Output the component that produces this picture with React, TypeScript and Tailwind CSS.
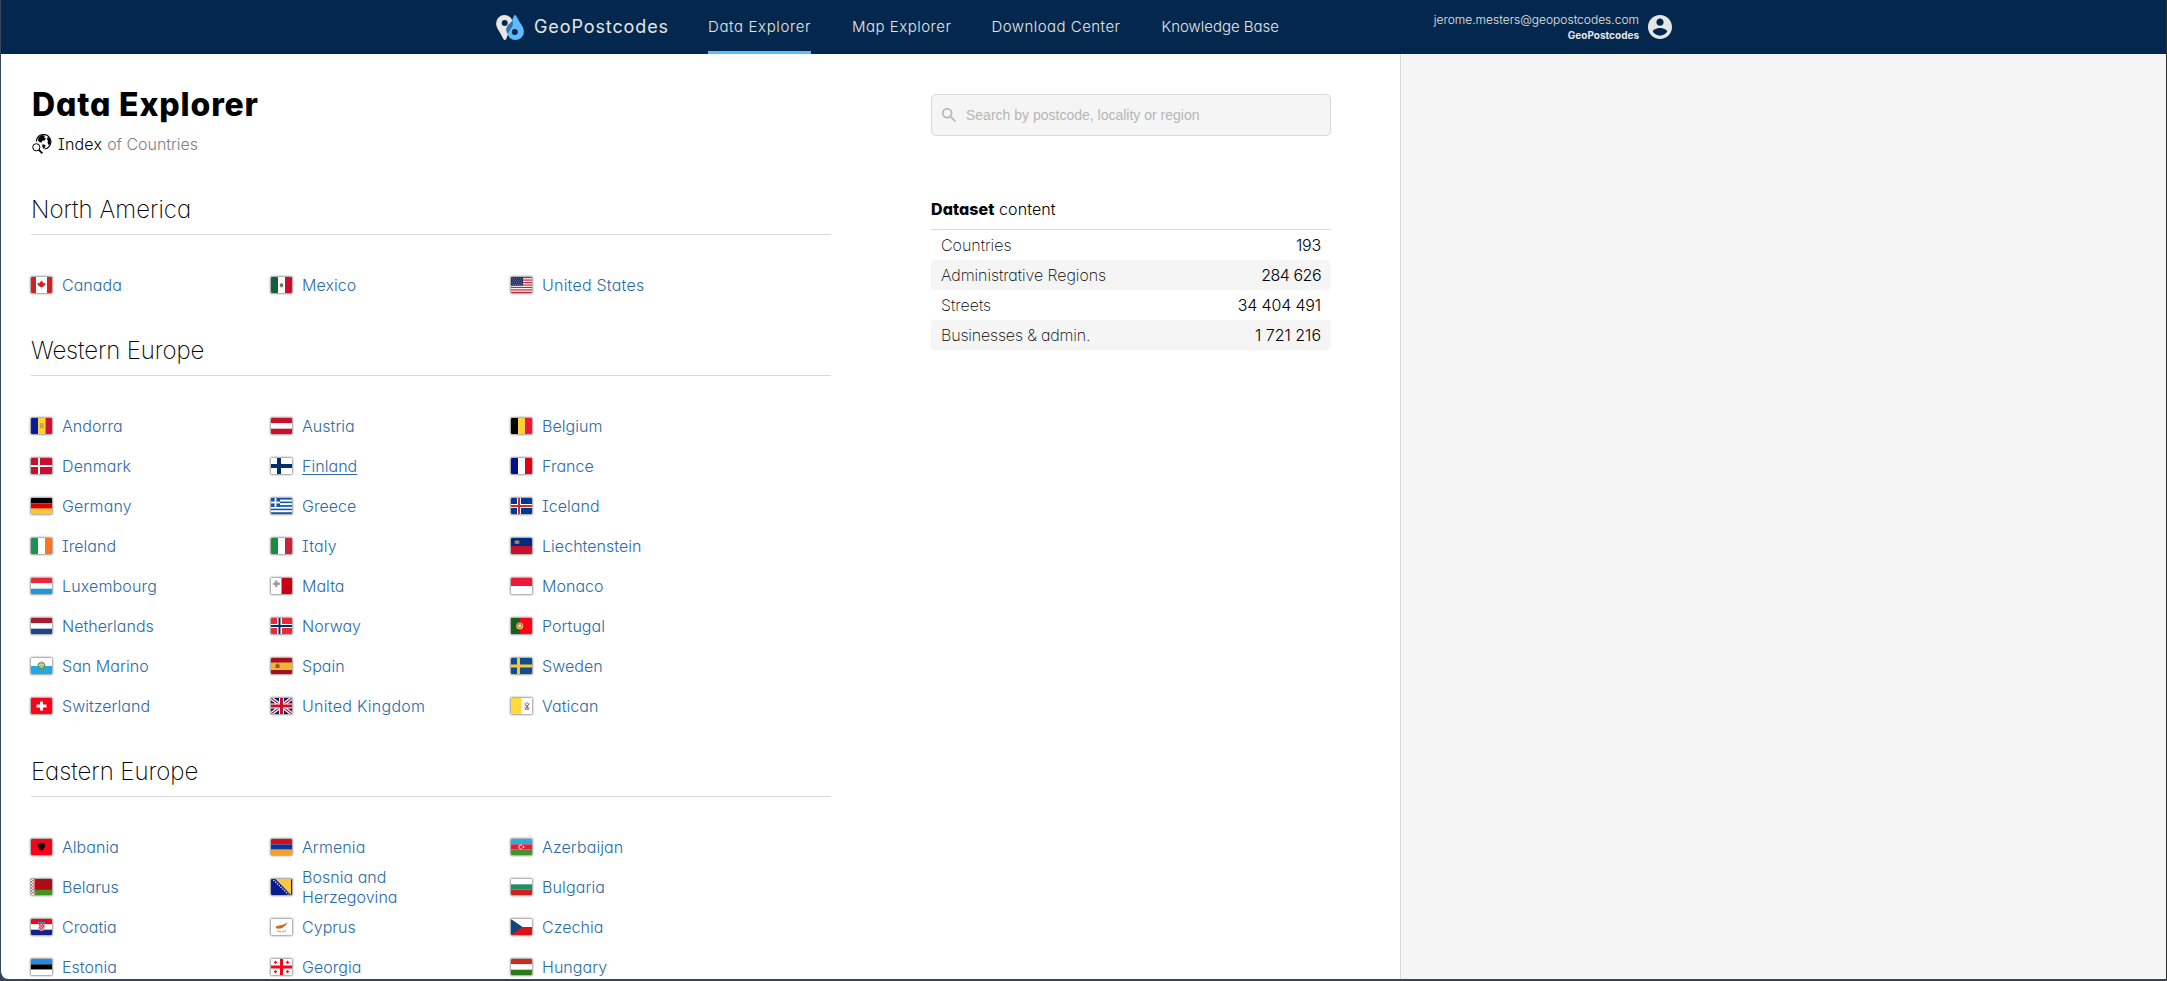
import type { ReactNode } from "react";

const rect = (x: number, y: number, w: number, h: number, f: string) => (
  <rect x={x} y={y} width={w} height={h} fill={f} />
);

function V({ c }: { c: string[] }) {
  return <>{c.map((f, i) => <rect key={i} x={i * 7} width="7" height="16" fill={f} />)}</>;
}

function H({ c }: { c: string[] }) {
  const h = 16 / c.length;
  return <>{c.map((f, i) => <rect key={i} y={i * h} width="21" height={h} fill={f} />)}</>;
}

function Nordic({ bg, outer, inner }: { bg: string; outer: string; inner?: string }) {
  return (
    <>
      {rect(0, 0, 21, 16, bg)}
      {inner ? (
        <>
          {rect(6, 0, 4, 16, outer)}
          {rect(0, 6, 21, 4, outer)}
          {rect(7, 0, 2, 16, inner)}
          {rect(0, 7, 21, 2, inner)}
        </>
      ) : (
        <>
          {rect(6, 0, 3, 16, outer)}
          {rect(0, 6.5, 21, 3, outer)}
        </>
      )}
    </>
  );
}

const flags: Record<string, ReactNode> = {
  Canada: (
    <>
      {rect(0, 0, 21, 16, "#fff")}
      {rect(0, 0, 5, 16, "#d22027")}
      {rect(16, 0, 5, 16, "#d22027")}
      <path d="M10.5 3.500l1 1.600.9-.3-.2 2 1.500-1 .9.700-.4 1.600-2.500 1.900h-1v1.800h-.4V10h-1L6.800 8.100l-.4-1.600.9-.7 1.500 1-.2-2 .9.300z" fill="#d22027" />
    </>
  ),
  Mexico: (
    <>
      <V c={["#12603f", "#fff", "#c8102e"]} />
      <path d="M8.500 8.500l1-2 1.500-.5 1 1.500.5 2h-1.500l-1.500.5z" fill="#7d6a4a" />
      <path d="M9 9.500q1.500 1.500 3 0" stroke="#5a9a6a" strokeWidth=".7" fill="none" />
    </>
  ),
  "United States": (
    <>
      {rect(0, 0, 21, 16, "#fff")}
      {[0, 1, 2, 3, 4, 5, 6].map((i) => <rect key={i} y={i * 2.46} width="21" height="1.23" fill="#c3283c" />)}
      {rect(0, 0, 12, 8.6, "#27346a")}
      {[1.5, 3.5, 5.5, 7].map((y, j) =>
        [1, 3, 5, 7, 9].map((x) => <rect key={`${x}-${y}`} x={x + (j % 2)} y={y} width=".9" height=".7" fill="#8d94b4" />),
      )}
    </>
  ),
  Andorra: (
    <>
      {rect(0, 0, 7, 16, "#0a1c9c")}
      {rect(7, 0, 7.5, 16, "#fbd535")}
      {rect(14.5, 0, 6.5, 16, "#cf1035")}
      <rect x="8.8" y="5.3" width="3.8" height="5" rx="1" fill="#c98a4c" />
      <path d="M9.5 6.500h2.400M9.500 8.500h2.400M10.700 6v4" stroke="#e9c07a" strokeWidth=".5" />
    </>
  ),
  Austria: <H c={["#c8102e", "#fff", "#c8102e"]} />,
  Belgium: <V c={["#000", "#ffd23a", "#ef1837"]} />,
  Denmark: (
    <>
      {rect(0, 0, 21, 16, "#c8102e")}
      {rect(7, 0, 2, 16, "#fff")}
      {rect(0, 7, 21, 2, "#fff")}
    </>
  ),
  Finland: (
    <>
      {rect(0, 0, 21, 16, "#fff")}
      {rect(6, 0, 4, 16, "#002f6c")}
      {rect(0, 6, 21, 4, "#002f6c")}
    </>
  ),
  France: <V c={["#000f8a", "#fff", "#e1001a"]} />,
  Germany: <H c={["#000", "#dd0000", "#ffc72c"]} />,
  Greece: (
    <>
      <H c={["#1157a8", "#fff", "#1157a8", "#fff", "#1157a8", "#fff", "#1157a8", "#fff", "#1157a8"]} />
      {rect(0, 0, 9, 8.9, "#1157a8")}
      {rect(3.6, 0, 1.8, 8.9, "#fff")}
      {rect(0, 3.6, 9, 1.8, "#fff")}
    </>
  ),
  Iceland: <Nordic bg="#003897" outer="#fff" inner="#d72828" />,
  Ireland: <V c={["#1c9350", "#fff", "#ff7324"]} />,
  Italy: <V c={["#1c8a45", "#fff", "#ca2236"]} />,
  Liechtenstein: (
    <>
      <H c={["#002b7f", "#c8102e"]} />
      <rect x="3.5" y="2.5" width="5" height="3.5" rx="1" fill="#8a7a3a" />
      <path d="M4.5 3.500h3M6 3v3" stroke="#d2b45a" strokeWidth=".5" />
    </>
  ),
  Luxembourg: <H c={["#ea2839", "#fff", "#1c9ad8"]} />,
  Malta: (
    <>
      {rect(0, 0, 21, 16, "#fff")}
      {rect(10.5, 0, 10.5, 16, "#c60018")}
      <path d="M4 2.500h2.500v2H9V7H6.500v2H4V7H2V4.500h2z" fill="#aaa19c" />
      <circle cx="5.3" cy="5.7" r="1" fill="#a88474" />
    </>
  ),
  Monaco: <H c={["#ef1837", "#fff"]} />,
  Netherlands: <H c={["#a51c30", "#fff", "#1e448a"]} />,
  Norway: (
    <>
      {rect(0, 0, 21, 16, "#ea2839")}
      {rect(6, 0, 5, 16, "#fff")}
      {rect(0, 6, 21, 4, "#fff")}
      {rect(7.5, 0, 2, 16, "#002f6c")}
      {rect(0, 7, 21, 2, "#002f6c")}
    </>
  ),
  Portugal: (
    <>
      {rect(0, 0, 21, 16, "#ff0018")}
      {rect(0, 0, 8.7, 16, "#14601c")}
      <circle cx="8.7" cy="8" r="3.5" fill="#e2c63c" />
      <path d="M7 6h3.400v2.800L8.700 10 7 8.800z" fill="#fff" stroke="#e8303a" strokeWidth=".9" />
    </>
  ),
  "San Marino": (
    <>
      <H c={["#fff", "#1fa9ec"]} />
      <circle cx="10.5" cy="8" r="3.2" fill="none" stroke="#6c9a4a" strokeWidth="1.5" />
      <circle cx="10.5" cy="8" r="2" fill="#8ec9c8" />
      <path d="M9.5 4l1-1 1 1v1h-2z" fill="#e0a83a" />
    </>
  ),
  Spain: (
    <>
      {rect(0, 0, 21, 16, "#a51020")}
      {rect(0, 4.5, 21, 7.5, "#f2b632")}
      <path d="M4.500 6.500l2-1.500 2 1.500.8 3.500h-5.300z" fill="#bd6a3a" />
      <rect x="5.5" y="7" width="2" height="2.5" fill="#8a3a55" />
    </>
  ),
  Sweden: <Nordic bg="#0c4f8c" outer="#fbc63a" />,
  Switzerland: (
    <>
      {rect(0, 0, 21, 16, "#ff0018")}
      {rect(9, 3.5, 3, 9, "#fff")}
      {rect(5.5, 6.5, 10, 3, "#fff")}
    </>
  ),
  "United Kingdom": (
    <>
      {rect(0, 0, 21, 16, "#012169")}
      <path d="M0 0l21 16M21 0L0 16" stroke="#fff" strokeWidth="3.6" />
      <path d="M0 0l21 16M21 0L0 16" stroke="#c8102e" strokeWidth="1.2" />
      <path d="M10.5 0v16M0 8h21" stroke="#fff" strokeWidth="5" />
      <path d="M10.5 0v16M0 8h21" stroke="#c8102e" strokeWidth="3" />
    </>
  ),
  Vatican: (
    <>
      {rect(0, 0, 21, 16, "#fff")}
      {rect(0, 0, 10.5, 16, "#ffdc3c")}
      <path d="M13.500 5.500l4.500 6M18.500 5.500l-4.500 6" stroke="#8a8070" strokeWidth="1.1" />
      <path d="M14 5.800q2-3.500 4 0z" fill="#c99a6a" />
      <path d="M14 9.500l1.600 2.200M18 9.500l-1.600 2.200M16 7v2.500" stroke="#c8303a" strokeWidth="1" />
    </>
  ),
  Albania: (
    <>
      {rect(0, 0, 21, 16, "#ff0018")}
      <path d="M7 4l1.700.7.600-1.200 1.200.9 1.200-.9.600 1.200L14 4l.3 2-1 .5 1 1.200-1.500 1.500.2 1.500-1.500-.2-1 2.300-1-2.300-1.500.2.2-1.500-1.500-1.500 1-1.200-1-.5z" fill="#1a0206" />
    </>
  ),
  Armenia: <H c={["#d90a1c", "#0a369c", "#f2a22c"]} />,
  Azerbaijan: (
    <>
      <H c={["#22b2de", "#ef1837", "#43932f"]} />
      <path d="M11 6.400a2 2 0 1 0 0 3.200" fill="none" stroke="#fff" strokeWidth=".9" />
      <circle cx="12.5" cy="8" r=".9" fill="#fff" />
    </>
  ),
  Belarus: (
    <>
      {rect(0, 0, 21, 16, "#ae0c14")}
      {rect(0, 10.7, 21, 5.3, "#42931f")}
      {rect(0, 0, 3.5, 16, "#fff")}
      <path d="M0 0l3.500 3L0 6l3.500 3L0 12l3.500 3M3.500 0L0 3l3.500 3L0 9l3.500 3L0 15" stroke="#c83a40" strokeWidth=".8" fill="none" />
    </>
  ),
  "Bosnia and Herzegovina": (
    <>
      {rect(0, 0, 21, 16, "#0a1c8c")}
      <path d="M4.500 0H20v16z" fill="#ffc83c" />
      <path d="M2.500 1l15 14.500" stroke="#fff" strokeWidth="1.3" strokeDasharray="1.2 1.3" />
    </>
  ),
  Bulgaria: <H c={["#fff", "#1c8f68", "#d0201e"]} />,
  Croatia: (
    <>
      <H c={["#ff0018", "#fff", "#171f8c"]} />
      <path d="M7.500 4.500h6v5q-1 2.500-3 2.500t-3-2.500z" fill="#f4b4b4" />
      <path d="M8 5h1.500v1.500H8zM11 5h1.500v1.500H11zM9.500 6.500H11V8H9.500zM12 6.500h1.500V8H12zM8 8h1.500v1.500H8zM11 8h1.500v1.500H11zM9.500 9.500H11V11H9.500z" fill="#e8202c" />
      {rect(7, 2.8, 7, 1.9, "#3f7fba")}
    </>
  ),
  Cyprus: (
    <>
      {rect(0, 0, 21, 16, "#fff")}
      <path d="M4.500 8.500Q5 6.500 8 6.500l3-.5q3-.5 5.500-3-.8 3-3.500 4.500Q11 10 8.500 9.500 5.500 10 4.500 8.500z" fill="#c96a1c" />
      <path d="M6 11.500q1.500 1.300 4 1.400M15 11.500q-1.500 1.300-4 1.400" stroke="#6a7a62" strokeWidth=".7" fill="none" />
    </>
  ),
  Czechia: (
    <>
      <H c={["#fff", "#d7141a"]} />
      <path d="M0 0l11.500 8L0 16z" fill="#11457e" />
    </>
  ),
  Estonia: <H c={["#1e8ce8", "#000", "#fff"]} />,
  Georgia: (
    <>
      {rect(0, 0, 21, 16, "#fff")}
      {rect(9, 0, 3, 16, "#ff0018")}
      {rect(0, 6.5, 21, 3, "#ff0018")}
      {[4.5, 16.5].map((x) =>
        [3.3, 12.7].map((y) => (
          <path key={`${x}-${y}`} d={`M${x - 1.5} ${y}h3M${x} ${y - 1.5}v3`} stroke="#ff0018" strokeWidth="1.2" />
        )),
      )}
    </>
  ),
  Hungary: <H c={["#cd2a1e", "#fff", "#2c7a1c"]} />,
};

const tracking: Record<string, string> = {
  "United States": "tracking-[0.22px]",
  "United Kingdom": "tracking-[0.28px]",
  Denmark: "tracking-[0.15px]",
  Germany: "tracking-[0.15px]",
  Luxembourg: "tracking-[0.15px]",
  "San Marino": "tracking-[0.05px]",
  Azerbaijan: "tracking-[0.12px]",
  Armenia: "tracking-[0.1px]",
  Bulgaria: "tracking-[0.12px]",
  Italy: "tracking-[0.2px]",
};

const sections: { name: string; cls: string; countries: string[] }[] = [
  { name: "North America", cls: "tracking-[0.03px]", countries: ["Canada", "Mexico", "United States"] },
  {
    name: "Western Europe",
    cls: "tracking-[-0.12px]",
    countries: [
      "Andorra", "Austria", "Belgium",
      "Denmark", "Finland", "France",
      "Germany", "Greece", "Iceland",
      "Ireland", "Italy", "Liechtenstein",
      "Luxembourg", "Malta", "Monaco",
      "Netherlands", "Norway", "Portugal",
      "San Marino", "Spain", "Sweden",
      "Switzerland", "United Kingdom", "Vatican",
    ],
  },
  {
    name: "Eastern Europe",
    cls: "tracking-[-0.05px]",
    countries: [
      "Albania", "Armenia", "Azerbaijan",
      "Belarus", "Bosnia and Herzegovina", "Bulgaria",
      "Croatia", "Cyprus", "Czechia",
      "Estonia", "Georgia", "Hungary",
    ],
  },
];

const stats = [
  { label: "Countries", value: "193", cls: "", num: "tracking-[-0.2px]" },
  { label: "Administrative Regions", value: "284 626", cls: "tracking-[-0.06px]", num: "tracking-[-0.5px]" },
  { label: "Streets", value: "34 404 491", cls: "", num: "tracking-[-0.15px]" },
  { label: "Businesses & admin.", value: "1 721 216", cls: "tracking-[-0.16px]", num: "tracking-[0px]" },
];

const nav = [
  { label: "Data Explorer", cls: "w-[103px] tracking-[0.62px]", active: true },
  { label: "Map Explorer", cls: "w-[98.5px] tracking-[0.5px]", active: false },
  { label: "Download Center", cls: "w-[129px] tracking-[0.46px]", active: false },
  { label: "Knowledge Base", cls: "w-[118px] tracking-[-0.02px]", active: false },
];

function Logo() {
  return (
    <svg width="28" height="25" viewBox="0 0 28 25" className="shrink-0">
      <path fillRule="evenodd" fill="#e6e6e6" d="M8.500 0A8.400 8.400 0 0 0 .1 8.500C.1 13 4.500 17.500 7 23.500q1.800 3 3.500 0C12 17.500 16.900 13 16.900 8.500A8.400 8.400 0 0 0 8.500 0zM8.700 5a3 3 0 1 1 0 6 3 3 0 0 1 0-6z" />
      <path fillRule="evenodd" fill="#5dbcff" d="M19 0c1.500 0 2.500 4 5 7.500 2 3 3.900 5.500 3.900 9A8.300 8.300 0 0 1 19.500 25a8.300 8.300 0 0 1-8.300-8.500c0-3.500 1.800-6 3.800-9C17.300 4 17.500 0 19 0zM18.800 14a3 3 0 1 0 0 6 3 3 0 0 0 0-6z" />
      <path fill="#2f74ae" d="M16.600 5.500c.8 3.500 0 6-2.300 9-1.300 1.700-2 3.200-2.600 4.500-2.200-3-2-6 .5-9 1.800-2 3-3 4.400-4.500z" />
    </svg>
  );
}

function GlobeSearch() {
  return (
    <svg width="20" height="20" viewBox="0 0 20 20" className="shrink-0" fill="none" stroke="#000">
      <path d="M4.300 7.500A7.300 7.300 0 1 1 12.500 15" strokeWidth="1.2" />
      <path d="M6.500 3.500L10 1l3 .8-1 1.700 2 .5-1.500 2.500-2.500.3-.5 2L7.500 8 6 6.500z" fill="#000" stroke="none" />
      <path d="M16 2.800l2.500 3-.3 4-1.500 1.500-1.200-2.500.5-2-1.200-1.500z" fill="#000" stroke="none" />
      <path d="M10.500 10l3 1.200-.3 1.800-1.700 2-1.200-2.500z" fill="#000" stroke="none" />
      <circle cx="4.3" cy="13.3" r="3.6" strokeWidth="1" />
      <path d="M6.800 15.800l3.600 3.600" strokeWidth="1.7" />
    </svg>
  );
}

export default function App() {
  return (
    <div className="h-[981px] w-full overflow-hidden bg-[#37445a]">
      <div className="flex h-[979px] flex-col overflow-hidden rounded-bl-[8px] border-r border-l border-r-[#2e2e30] border-l-[#37445a] bg-white font-[Inter,sans-serif] text-black [font-feature-settings:'cv11','cv08']">
        <header className="flex h-[54px] shrink-0 bg-[#04284d] pl-[495px] text-[#e6e6e6]">
          <div className="flex w-[212px] items-center">
            <Logo />
            <span className="ml-[10px] text-[18px] leading-[26px] tracking-[0.9px]">GeoPostcodes</span>
          </div>
          <nav className="flex gap-[41px]">
            {nav.map((n) => (
              <a
                key={n.label}
                className={`flex h-[54px] items-center border-b-[3px] pt-[3px] text-[15px] font-light whitespace-nowrap ${n.active ? "border-[#5dbcff]" : "border-transparent"} ${n.cls}`}
              >
                {n.label}
              </a>
            ))}
          </nav>
          <div className="ml-auto flex items-center gap-[9px] pr-[494px]">
            <div className="pb-px text-right">
              <div className="text-[12px] leading-[16px] font-light">jerome.mesters@geopostcodes.com</div>
              <div className="text-[10px] leading-[14px] font-bold">GeoPostcodes</div>
            </div>
            <svg width="24" height="24" viewBox="2 2 20 20" fill="#e6e6e6">
              <path d="M12 2C6.480 2 2 6.480 2 12s4.480 10 10 10 10-4.480 10-10S17.520 2 12 2zm0 3c1.660 0 3 1.340 3 3s-1.340 3-3 3-3-1.340-3-3 1.340-3 3-3zm0 14.200c-2.500 0-4.710-1.280-6-3.220.03-1.990 4-3.080 6-3.080 1.990 0 5.970 1.090 6 3.080-1.290 1.940-3.500 3.220-6 3.220z" />
            </svg>
          </div>
        </header>

        <div className="flex min-h-0 flex-1">
          <main className="flex w-[1399px] shrink-0 gap-[100px] overflow-hidden pl-[30px]">
            <div className="w-[800px] shrink-0 pt-[31px]">
              <h1 className="pl-px text-[32px] leading-[40px] font-extrabold tracking-[0.85px]">Data Explorer</h1>
              <div className="mt-[7px] mb-2 flex h-6 items-center pl-px text-[16px] leading-6">
                <GlobeSearch />
                <span className="ml-[6px] font-[350] tracking-[0.2px]">Index</span>
                <span className="ml-[5px] font-light tracking-[-0.05px] text-[#808080]">of Countries</span>
              </div>
              {sections.map((s) => (
                <section key={s.name}>
                  <h2 className={`border-b border-[#d9d9d9] pt-[31px] pb-[9px] text-[24px] leading-[30px] font-extralight ${s.cls}`}>
                    {s.name}
                  </h2>
                  <div className="grid grid-cols-[240px_240px_240px] pt-[30px]">
                    {s.countries.map((c) => (
                      <div key={c} className="flex h-10 items-center gap-[10px]">
                        <svg width="21" height="16" viewBox="0 0 21 16" className="shrink-0 rounded-[1px] shadow-[0_0_2px_1px_rgba(0,0,0,0.4)]">
                          {flags[c]}
                        </svg>
                        <a className={`max-w-[150px] text-[16px] leading-5 font-light text-[#2a6ba8] ${c === "Finland" ? "underline decoration-1 underline-offset-2" : ""} ${tracking[c] ?? "tracking-[0.04px]"}`}>
                          {c}
                        </a>
                      </div>
                    ))}
                  </div>
                </section>
              ))}
            </div>

            <aside className="w-[400px] shrink-0 pt-10">
              <div className="flex h-[42px] items-center gap-[10px] rounded-[5px] border border-[#d9d9d9] bg-[#f5f5f5] pl-[10px] text-[#b5b5b5]">
                <svg width="14" height="14" viewBox="3 3 17.5 17.5" fill="currentColor">
                  <path d="M15.500 14h-.79l-.28-.27C15.410 12.590 16 11.110 16 9.500 16 5.910 13.090 3 9.500 3S3 5.910 3 9.500 5.910 16 9.500 16c1.610 0 3.090-.59 4.230-1.570l.27.28v.79l5 4.990L20.490 19l-4.990-5zm-6 0C7.010 14 5 11.990 5 9.500S7.010 5 9.500 5 14 7.010 14 9.500 11.990 14 9.500 14z" />
                </svg>
                <span className="font-['Liberation_Sans',Arial,sans-serif] text-[14px] leading-5">
                  Search by postcode, locality or region
                </span>
              </div>
              <h3 className="mt-[61px] border-b border-[#d9d9d9] pb-2 text-[16px] leading-6 font-light">
                <span className="font-extrabold tracking-[0.1px]">Dataset</span>{" "}
                <span className="tracking-[0.1px]">content</span>
              </h3>
              {stats.map((r, i) => (
                <div
                  key={r.label}
                  className={`flex h-[30px] items-center justify-between rounded-[4px] px-[10px] text-[16px] ${i % 2 ? "bg-[#f5f5f5]" : ""}`}
                >
                  <span className={`font-extralight ${r.cls}`}>{r.label}</span>
                  <span className={`font-light ${r.num}`}>{r.value}</span>
                </div>
              ))}
            </aside>
          </main>
          <div className="flex-1 border-l border-[#d9d9d9] bg-[#f5f5f5]" />
        </div>
      </div>
    </div>
  );
}
